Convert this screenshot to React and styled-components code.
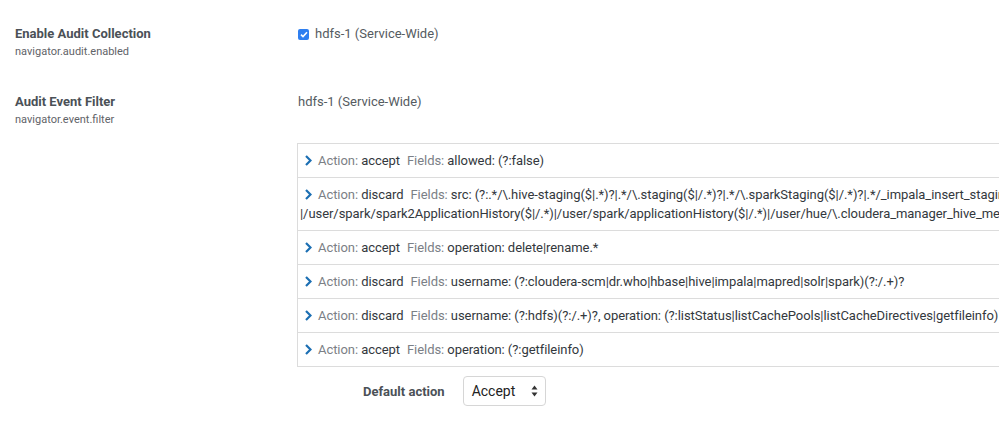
import React, { useState } from "react";
import styled, { createGlobalStyle } from "styled-components";

const GlobalStyle = createGlobalStyle`
  html, body {
    margin: 0;
    padding: 0;
    background: #fff;
    overflow: hidden;
  }
  body {
    font-family: Roboto, "Liberation Sans", Arial, sans-serif;
    font-size: 13px;
    color: #333;
  }
`;

const Page = styled.div`
  width: 999px;
  padding: 25px 0 0 15px;
  box-sizing: border-box;
  overflow: hidden;
`;

const ConfigRow = styled.div`
  display: grid;
  grid-template-columns: 282px 1fr;
  margin-bottom: ${(p) => p.$gap || 0}px;
`;

const LabelCell = styled.div`
  display: flex;
  flex-direction: column;
  gap: 2px;
`;

const LabelTitle = styled.div`
  font-size: 13px;
  font-weight: 700;
  color: #4b5157;
  line-height: 18px;
`;

const LabelKey = styled.div`
  font-size: 11px;
  color: #5f6368;
  line-height: 14px;
`;

const ValueCell = styled.div`
  display: flex;
  flex-direction: column;
  min-width: 0;
`;

const ScopeLine = styled.label`
  display: flex;
  align-items: center;
  gap: 6px;
  font-size: 13px;
  color: #555b61;
  line-height: 18px;
  padding-left: ${(p) => (p.$inset ? 1 : 0)}px;
`;

const Check = styled.span`
  width: 11px;
  height: 11px;
  border-radius: 2px;
  background: #2f7ff0;
  display: inline-flex;
  align-items: center;
  justify-content: center;
  margin-left: 1px;
`;

const RuleList = styled.div`
  margin-top: 32px;
  width: 900px;
  border: 1px solid #dcdcdc;
  border-right: none;
`;

const Rule = styled.div`
  padding: 7px 0 7px 2px;
  line-height: 19px;
  letter-spacing: -0.06px;
  border-top: ${(p) => (p.$first ? "none" : "1px solid #dcdcdc")};
  cursor: pointer;
  white-space: nowrap;
`;

const Chevron = styled.svg`
  display: inline-block;
  vertical-align: -1px;
  margin: 0 6px 0 5px;
`;

const Key = styled.span`
  color: #7b8086;
`;

const Val = styled.span`
  color: #33383d;
`;

const Spacer = styled.span`
  display: inline-block;
  width: 7px;
`;

const DefaultRow = styled.div`
  display: flex;
  align-items: center;
  gap: 18px;
  margin: 9px 0 0 66px;
`;

const DefaultLabel = styled.span`
  font-weight: 700;
  color: #4b5157;
  font-size: 13px;
`;

const SelectBox = styled.div`
  width: 83px;
  height: 30px;
  box-sizing: border-box;
  border: 1px solid #d6d6d6;
  border-radius: 4px;
  display: flex;
  align-items: center;
  justify-content: space-between;
  padding: 0 7px 0 8px;
  font-size: 14px;
  color: #222;
`;

const rules = [
  { action: "accept", fields: ["allowed: (?:false)"] },
  {
    action: "discard",
    fields: [
      "src: (?:.*/\\.hive-staging($|.*)?|.*/\\.staging($|/.*)?|.*/\\.sparkStaging($|/.*)?|.*/_impala_insert_staging($|/.*)?",
      "|/user/spark/spark2ApplicationHistory($|/.*)|/user/spark/applicationHistory($|/.*)|/user/hue/\\.cloudera_manager_hive_metastore_canary(/.*)?)",
    ],
  },
  { action: "accept", fields: ["operation: delete|rename.*"] },
  {
    action: "discard",
    fields: [
      "username: (?:cloudera-scm|dr.who|hbase|hive|impala|mapred|solr|spark)(?:/.+)?",
    ],
  },
  {
    action: "discard",
    fields: [
      "username: (?:hdfs)(?:/.+)?, operation: (?:listStatus|listCachePools|listCacheDirectives|getfileinfo)",
    ],
  },
  { action: "accept", fields: ["operation: (?:getfileinfo)"] },
];

const ChevronIcon = () => (
  <Chevron width="7" height="11" viewBox="0 0 7 11">
    <path d="M1 1l4.5 4.5L1 10" fill="none" stroke="#1c6fb3" strokeWidth="2.2" />
  </Chevron>
);

export default function App() {
  const [open, setOpen] = useState(null);

  return (
    <>
      <GlobalStyle />
      <Page>
        <ConfigRow $gap={34}>
          <LabelCell>
            <LabelTitle>Enable Audit Collection</LabelTitle>
            <LabelKey>navigator.audit.enabled</LabelKey>
          </LabelCell>
          <ValueCell>
            <ScopeLine>
              <Check>
                <svg width="8" height="7" viewBox="0 0 8 7">
                  <path d="M1 3.6l2 2L7 1.2" fill="none" stroke="#fff" strokeWidth="1.6" />
                </svg>
              </Check>
              hdfs-1 (Service-Wide)
            </ScopeLine>
          </ValueCell>
        </ConfigRow>

        <ConfigRow>
          <LabelCell>
            <LabelTitle>Audit Event Filter</LabelTitle>
            <LabelKey>navigator.event.filter</LabelKey>
          </LabelCell>
          <ValueCell>
            <ScopeLine $inset>hdfs-1 (Service-Wide)</ScopeLine>
            <RuleList>
              {rules.map((r, i) => (
                <Rule
                  key={i}
                  $first={i === 0}
                  onClick={() => setOpen(open === i ? null : i)}
                >
                  <ChevronIcon />
                  <Key>Action: </Key>
                  <Val>{r.action}</Val>
                  <Spacer />
                  <Key>Fields: </Key>
                  <Val>{r.fields[0]}</Val>
                  {r.fields.slice(1).map((f, j) => (
                    <React.Fragment key={j}>
                      <br />
                      <Val>{f}</Val>
                    </React.Fragment>
                  ))}
                </Rule>
              ))}
            </RuleList>
            <DefaultRow>
              <DefaultLabel>Default action</DefaultLabel>
              <SelectBox>
                Accept
                <svg width="7" height="12" viewBox="0 0 7 12">
                  <path d="M3.5 0.5L6.5 4.5H0.5Z M3.5 11.5L6.5 7.5H0.5Z" fill="#333" />
                </svg>
              </SelectBox>
            </DefaultRow>
          </ValueCell>
        </ConfigRow>
      </Page>
    </>
  );
}
